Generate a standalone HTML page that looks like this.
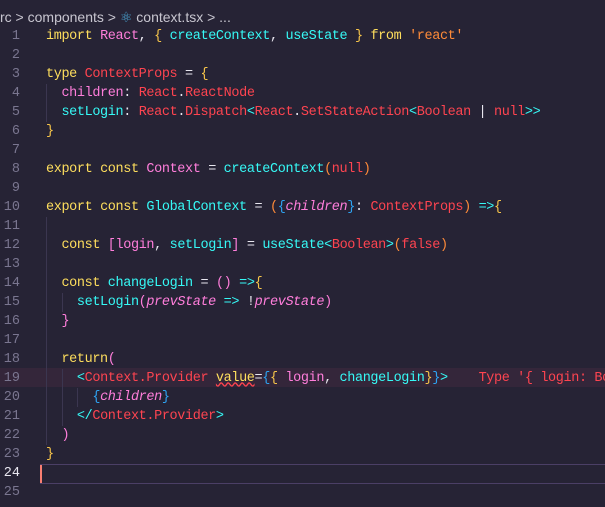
<!DOCTYPE html><html><head><style>
body{margin:0;width:605px;height:507px;background:#262335;overflow:hidden;font-family:"Liberation Mono",monospace;font-size:13.5px;letter-spacing:-0.38px}
.bc{position:absolute;left:0;top:7px;height:20px;line-height:20px;font-family:"Liberation Sans",sans-serif;font-size:14px;letter-spacing:0;color:#c8c6d0;white-space:pre}
.ln{position:absolute;left:0;width:20px;text-align:right;color:#7a7690;height:19px;line-height:19px;letter-spacing:0}
.c{position:absolute;left:46px;white-space:pre;height:19px;line-height:19px;color:#ff7edb}
.k{color:#fede5d}.p{color:#ff7edb}.r{color:#fe4450}.y{color:#36f9f6}.o{color:#f7c54a}.w{color:#e8e6ef}.s{color:#ff8b39}.i{font-style:italic}.b{color:#2ea3f2}
.g{position:absolute;width:1px;background:#3b3650}
</style></head><body>
<div class="bc">rc &gt; components &gt; <span style="color:#4aa8d8">⚛</span> context.tsx &gt; ...</div>
<div style="position:absolute;left:0;top:368px;width:605px;height:19px;background:#34263a"></div>
<div style="position:absolute;left:40px;top:464px;width:565px;height:18px;border-top:1px solid #4b3f66;border-bottom:1px solid #4b3f66"></div>
<div style="position:absolute;left:40px;top:465px;width:2px;height:18px;background:#f97e72"></div>
<div class="g" style="left:46px;top:84px;height:38px"></div>
<div class="g" style="left:46px;top:217px;height:228px"></div>
<div class="g" style="left:62px;top:293px;height:19px"></div>
<div class="g" style="left:62px;top:369px;height:57px"></div>
<div class="g" style="left:77px;top:388px;height:19px"></div>
<div id="L"></div>
<script>
var lines=[
'<span class="k">import</span> <span class="p">React</span><span class="w">,</span> <span class="o">{</span> <span class="y">createContext</span><span class="w">,</span> <span class="y">useState</span> <span class="o">}</span> <span class="k">from</span> <span class="s">\'react\'</span>',
'',
'<span class="k">type</span> <span class="r">ContextProps</span> <span class="w">=</span> <span class="o">{</span>',
'  <span class="p">children</span><span class="w">:</span> <span class="r">React</span><span class="w">.</span><span class="r">ReactNode</span>',
'  <span class="y">setLogin</span><span class="w">:</span> <span class="r">React</span><span class="w">.</span><span class="r">Dispatch</span><span class="y">&lt;</span><span class="r">React</span><span class="w">.</span><span class="r">SetStateAction</span><span class="y">&lt;</span><span class="r">Boolean</span> <span class="w">|</span> <span class="r">null</span><span class="y">&gt;&gt;</span>',
'<span class="o">}</span>',
'',
'<span class="k">export</span> <span class="k">const</span> <span class="p">Context</span> <span class="w">=</span> <span class="y">createContext</span><span class="s">(</span><span class="r">null</span><span class="s">)</span>',
'',
'<span class="k">export</span> <span class="k">const</span> <span class="y">GlobalContext</span> <span class="w">=</span> <span class="s">(</span><span class="b">{</span><span class="p i">children</span><span class="b">}</span><span class="w">:</span> <span class="r">ContextProps</span><span class="s">)</span> <span class="y">=&gt;</span><span class="o">{</span>',
'',
'  <span class="k">const</span> <span class="p">[</span><span class="p">login</span><span class="w">,</span> <span class="y">setLogin</span><span class="p">]</span> <span class="w">=</span> <span class="y">useState</span><span class="y">&lt;</span><span class="r">Boolean</span><span class="y">&gt;</span><span class="s">(</span><span class="r">false</span><span class="s">)</span>',
'',
'  <span class="k">const</span> <span class="y">changeLogin</span> <span class="w">=</span> <span class="p">()</span> <span class="y">=&gt;</span><span class="o">{</span>',
'    <span class="y">setLogin</span><span class="p">(</span><span class="p i">prevState</span> <span class="y">=&gt;</span> <span class="w">!</span><span class="p i">prevState</span><span class="p">)</span>',
'  <span class="p">}</span>',
'',
'  <span class="k">return</span><span class="p">(</span>',
'    <span class="y">&lt;</span><span class="r">Context.Provider</span> <span class="k" style="text-decoration:underline wavy #fe4450">value</span><span class="w">=</span><span class="b">{</span><span class="o">{</span> <span class="p">login</span><span class="w">,</span> <span class="y">changeLogin</span><span class="o">}</span><span class="b">}</span><span class="y">&gt;</span>    <span class="r">Type \'{ login: Bo</span>',
'      <span class="b">{</span><span class="p i">children</span><span class="b">}</span>',
'    <span class="y">&lt;/</span><span class="r">Context.Provider</span><span class="y">&gt;</span>',
'  <span class="p">)</span>',
'<span class="o">}</span>',
'',
''];
var h='';
for(var i=0;i<25;i++){var t=26.5+19*i;
h+='<div class="ln" style="top:'+t+'px;'+(i==23?'color:#e8e6ef':'')+'">'+(i+1)+'</div><div class="c" style="top:'+t+'px">'+lines[i]+'</div>';}
document.getElementById('L').innerHTML=h;
</script>
</body></html>
